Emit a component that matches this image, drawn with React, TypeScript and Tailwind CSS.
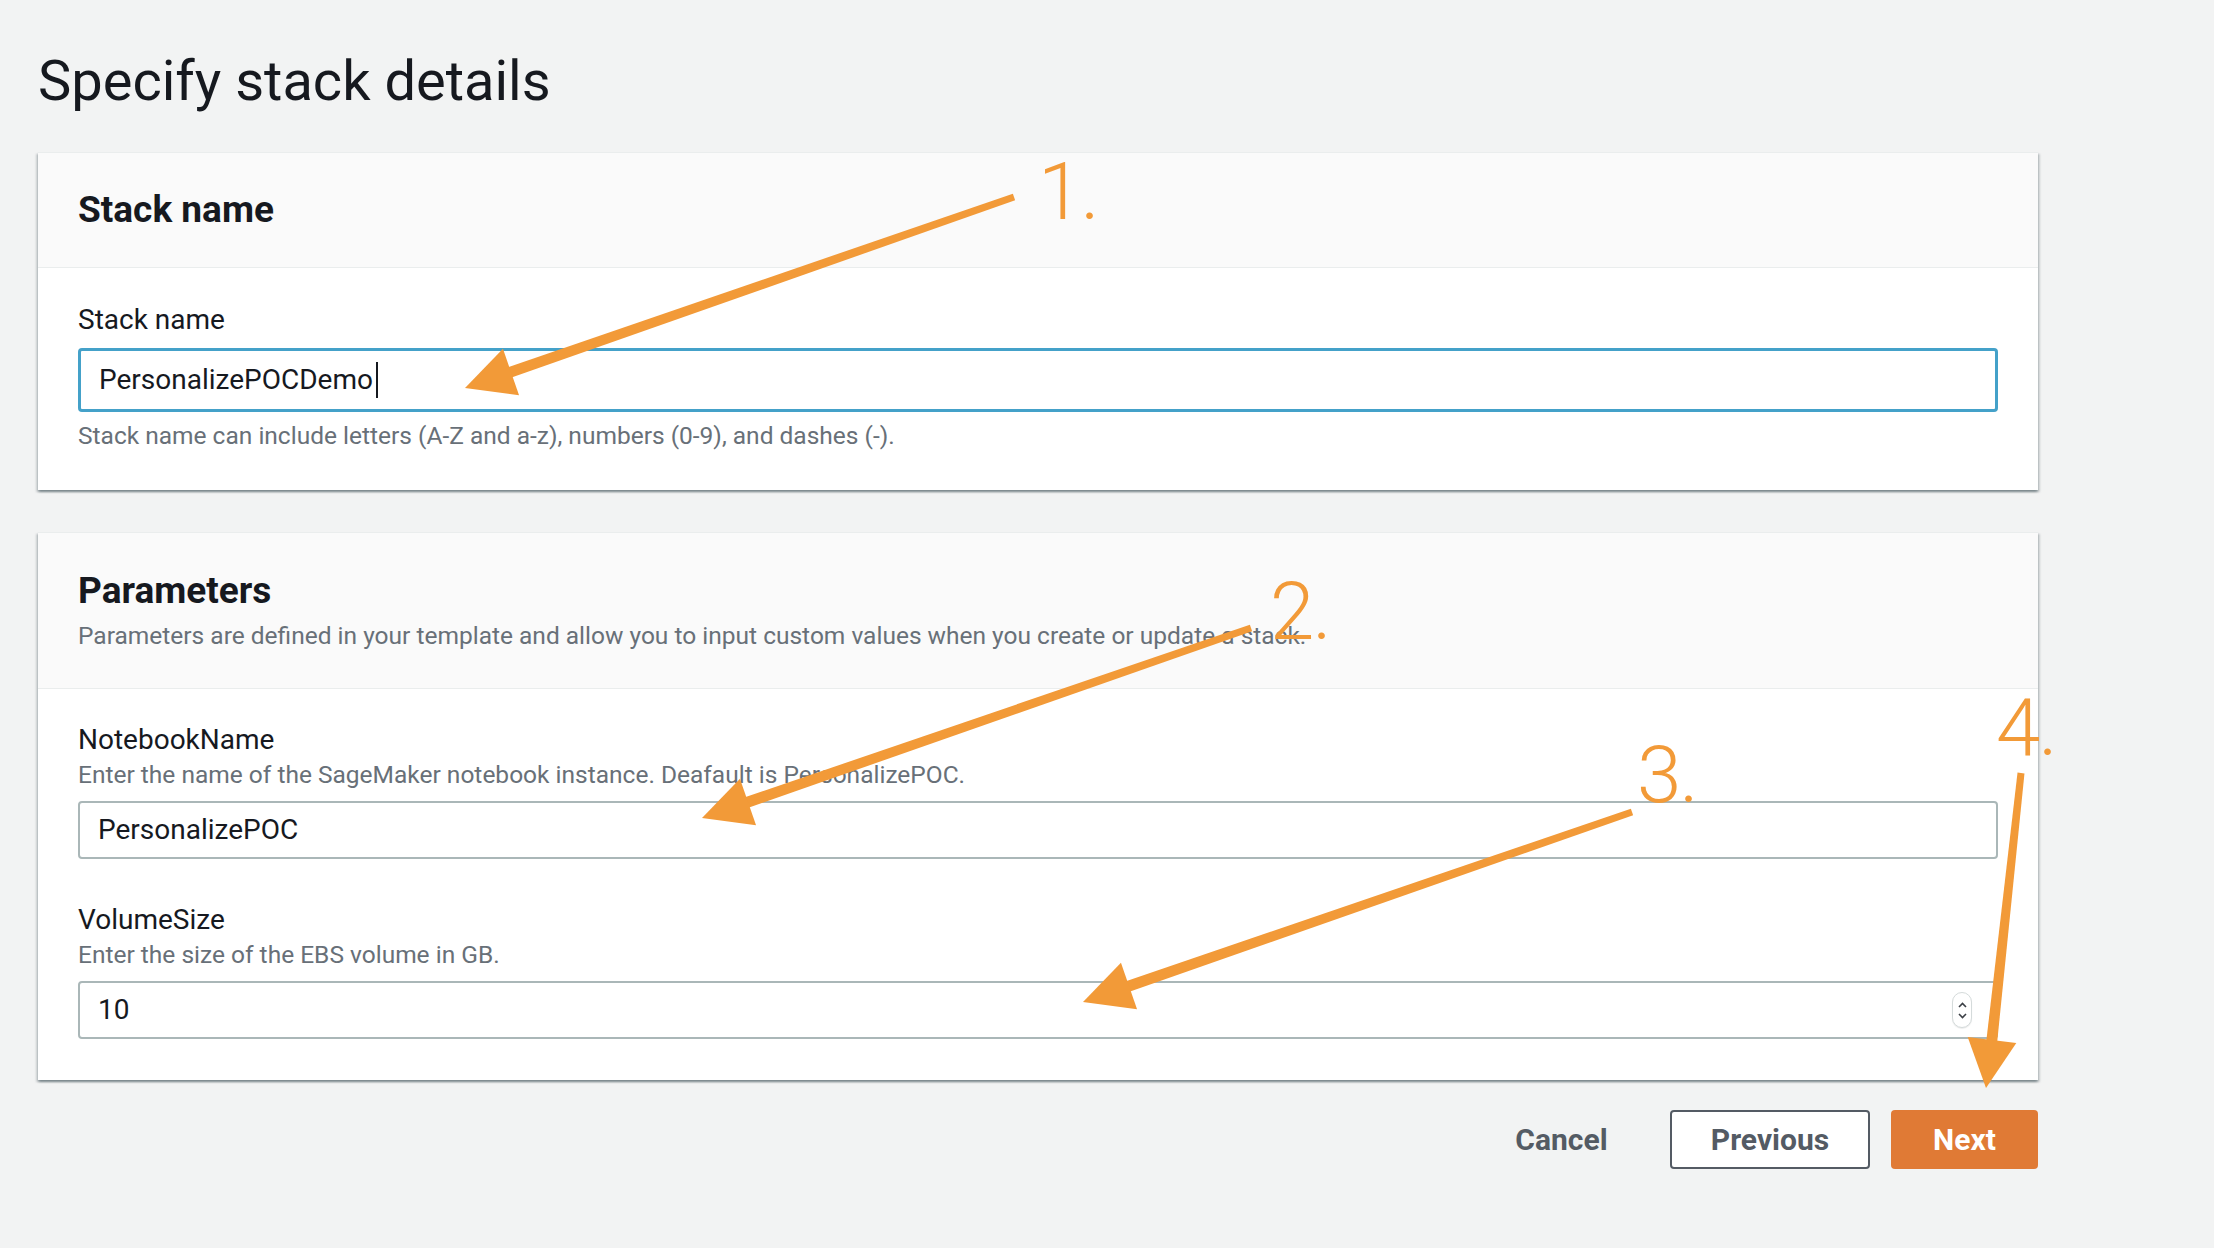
import React from "react";

type Arrow = { s: [number, number]; m: [number, number]; t: [number, number] };

const ARROWS: Arrow[] = [
  { s: [1014, 197], m: [511, 372], t: [465, 388] },
  { s: [1251, 628], m: [748, 802], t: [702, 818] },
  { s: [1632, 812], m: [1129, 986], t: [1083, 1002] },
  { s: [2021, 773], m: [1992, 1040], t: [1986, 1088] },
];

function arrowPolys(a: Arrow) {
  const [sx, sy] = a.s;
  const [mx, my] = a.m;
  const [tx, ty] = a.t;
  const dx = tx - mx;
  const dy = ty - my;
  const len = Math.hypot(dx, dy);
  const ux = dx / len;
  const uy = dy / len;
  const nx = -uy;
  const ny = ux;
  const hw = 24.5;
  const tw = 3.5;
  const bw = 5.5;
  const head = `${tx},${ty} ${mx + nx * hw},${my + ny * hw} ${mx - nx * hw},${my - ny * hw}`;
  const ex = mx + ux * 6;
  const ey = my + uy * 6;
  const shaft = `${sx + nx * tw},${sy + ny * tw} ${ex + nx * bw},${ey + ny * bw} ${ex - nx * bw},${ey - ny * bw} ${sx - nx * tw},${sy - ny * tw}`;
  return { head, shaft };
}

const LABELS: { text: string; left: number; top: number }[] = [
  { text: "1.", left: 1038, top: 152 },
  { text: "2.", left: 1270, top: 572 },
  { text: "3.", left: 1637, top: 735 },
  { text: "4.", left: 1996, top: 688 },
];

function Field({
  label,
  desc,
  value,
  spinner,
  className,
}: {
  label: string;
  desc: string;
  value: string;
  spinner?: boolean;
  className?: string;
}) {
  return (
    <div className={className}>
      <div className="text-[28px] leading-[36px] text-[#16191f]">{label}</div>
      <div className="mt-[1px] text-[24.5px] leading-[32px] text-[#687078]">{desc}</div>
      <div className="mt-[10px] h-[58px] border-[2px] border-[#aab7b8] rounded-[4px] bg-white flex items-center justify-between pl-[18px] pr-[24px]">
        <span className="text-[28px] leading-[36px] text-[#16191f]">{value}</span>
        {spinner && (
          <span className="w-[20px] h-[36px] rounded-full border border-[#d5dbdb] bg-white flex flex-col items-center justify-center gap-[5px] shadow-[0_1px_1px_rgba(0,0,0,0.08)]">
            <svg width="9" height="6" viewBox="0 0 9 6">
              <path d="M1 5 L4.5 1.5 L8 5" fill="none" stroke="#3b3f45" strokeWidth="1.6" />
            </svg>
            <svg width="9" height="6" viewBox="0 0 9 6">
              <path d="M1 1 L4.5 4.5 L8 1" fill="none" stroke="#3b3f45" strokeWidth="1.6" />
            </svg>
          </span>
        )}
      </div>
    </div>
  );
}

const cardShadow =
  "shadow-[0_2px_2px_0_rgba(0,28,36,0.3),2px_2px_2px_0_rgba(0,28,36,0.15),-2px_2px_2px_0_rgba(0,28,36,0.15)]";

export default function App() {
  return (
    <div className="relative w-full h-[1248px] overflow-hidden bg-[#f2f3f3] font-['Roboto',sans-serif] text-[#16191f]">
      <div className="pl-[38px] pt-[49px] w-[2038px]">
        <h1 className="text-[56px] leading-[64px] font-normal">Specify stack details</h1>

        <section className={`mt-[39px] bg-white border-t border-[#eaeded] ${cardShadow}`}>
          <div className="bg-[#fafafa] border-b border-[#eaeded] px-[40px] pt-[35px] pb-[35px]">
            <h2 className="text-[37px] leading-[44px] font-bold">Stack name</h2>
          </div>
          <div className="px-[40px] pt-[34px] pb-[38px]">
            <div className="text-[28px] leading-[36px]">Stack name</div>
            <div className="mt-[10px] h-[64px] border-[3px] border-[#44a1c9] rounded-[4px] flex items-center pl-[18px]">
              <span className="text-[28px] leading-[36px]">PersonalizePOCDemo</span>
              <span className="ml-[3px] inline-block w-[2px] h-[36px] bg-[#16191f]" />
            </div>
            <div className="mt-[8px] text-[24.5px] leading-[32px] text-[#687078]">
              Stack name can include letters (A-Z and a-z), numbers (0-9), and dashes (-).
            </div>
          </div>
        </section>

        <section className={`mt-[42px] bg-white border-t border-[#eaeded] ${cardShadow}`}>
          <div className="bg-[#fafafa] border-b border-[#eaeded] px-[40px] pt-[36px] pb-[36px]">
            <h2 className="text-[37px] leading-[44px] font-bold">Parameters</h2>
            <div className="mt-[7px] text-[24.5px] leading-[32px] text-[#687078]">
              Parameters are defined in your template and allow you to input custom values when you create or update a stack.
            </div>
          </div>
          <div className="px-[40px] pt-[33px] pb-[41px]">
            <Field
              label="NotebookName"
              desc="Enter the name of the SageMaker notebook instance. Deafault is PersonalizePOC."
              value="PersonalizePOC"
            />
            <Field
              className="mt-[43px]"
              label="VolumeSize"
              desc="Enter the size of the EBS volume in GB."
              value="10"
              spinner
            />
          </div>
        </section>

        <div className="mt-[30px] flex justify-end items-center">
          <button className="h-[59px] w-[169px] flex items-center justify-center text-[30px] leading-[36px] font-bold text-[#545b64]">
            Cancel
          </button>
          <button className="ml-[24px] h-[59px] w-[200px] flex items-center justify-center border-[2px] border-[#545b64] rounded-[4px] bg-white text-[30px] leading-[36px] font-bold text-[#545b64]">
            Previous
          </button>
          <button className="ml-[21px] h-[59px] w-[147px] flex items-center justify-center rounded-[4px] bg-[#e07a35] text-[30px] leading-[36px] font-bold text-white">
            Next
          </button>
        </div>
      </div>

      <svg className="absolute left-0 top-0 pointer-events-none" width="2214" height="1248" viewBox="0 0 2214 1248">
        {ARROWS.map((a, i) => {
          const p = arrowPolys(a);
          return (
            <g key={i} fill="#f29a38">
              <polygon points={p.shaft} />
              <polygon points={p.head} />
            </g>
          );
        })}
      </svg>

      {LABELS.map((l) => (
        <div
          key={l.text}
          className="absolute text-[80px] leading-[80px] font-light tracking-[-2px] text-[#f29a38] font-['Roboto',sans-serif]"
          style={{ left: l.left, top: l.top }}
        >
          {l.text}
        </div>
      ))}
    </div>
  );
}
